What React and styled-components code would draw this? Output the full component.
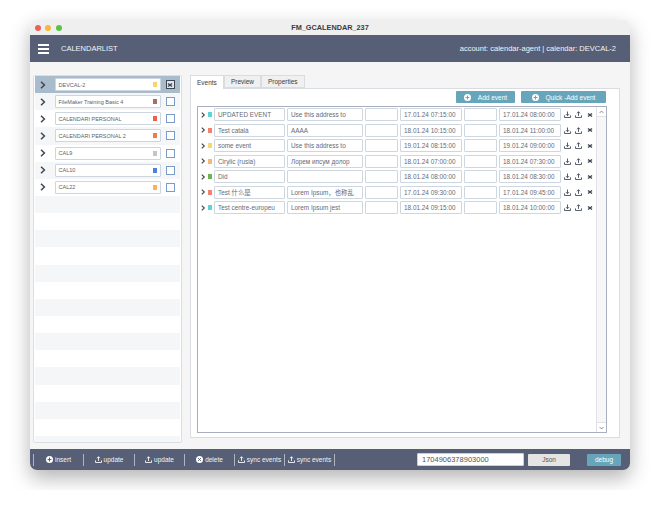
import React from 'react'
import styled, { createGlobalStyle } from 'styled-components'

const calendars = [
  { name: 'DEVCAL-2', color: '#f8d66d', selected: true },
  { name: 'FileMaker Training Basic 4', color: '#a5705f' },
  { name: 'CALENDARI PERSONAL', color: '#ee5f4f' },
  { name: 'CALENDARI PERSONAL 2', color: '#f07b4c' },
  { name: 'CAL9', color: '#c4c4c4' },
  { name: 'CAL10', color: '#4f7fe0' },
  { name: 'CAL22', color: '#f8b355' },
]

const events = [
  { title: 'UPDATED EVENT', desc: 'Use this address to', start: '17.01.24 07:15:00', end: '17.01.24 08:00:00', color: '#62d2da' },
  { title: 'Test català', desc: 'AAAA', start: '18.01.24 10:15:00', end: '18.01.24 11:00:00', color: '#f4806f' },
  { title: 'some event', desc: 'Use this address to', start: '19.01.24 08:15:00', end: '19.01.24 09:00:00', color: '#f8d66d' },
  { title: 'Cirylic (rusia)', desc: 'Лорем ипсум долор', start: '18.01.24 07:00:00', end: '18.01.24 07:30:00', color: '#f8b877' },
  { title: 'Did', desc: '', start: '18.01.24 08:00:00', end: '18.01.24 08:30:00', color: '#6db356' },
  { title: 'Test 什么是', desc: 'Lorem Ipsum，也称乱', start: '17.01.24 09:30:00', end: '17.01.24 09:45:00', color: '#f4806f' },
  { title: 'Test centre-europeu', desc: 'Lorem Ipsum jest', start: '18.01.24 09:15:00', end: '18.01.24 10:00:00', color: '#62d2da' },
]

const Chevron = ({ size = 6 }) => (
  <svg width={size} height={size * 1.34} viewBox="0 0 6 8" fill="none" stroke="#3f4654" strokeWidth="1.5">
    <path d="M1 .8 4.4 4 1 7.2" />
  </svg>
)

const Tray = ({ up, color = '#3f4654', size = 7 }) => (
  <svg width={size} height={size} viewBox="0 0 8 8" fill="none" stroke={color} strokeWidth="1">
    <path d="M.6 5v2.4h6.8V5" />
    <path d={up ? 'M4 5.6V1M2.3 2.6 4 .8l1.7 1.8' : 'M4 .6v4.6M2.3 3.6 4 5.4l1.7-1.8'} />
  </svg>
)

const Plus = ({ size = 7, ink = '#67a5ba' }) => (
  <svg width={size} height={size} viewBox="0 0 8 8">
    <circle cx="4" cy="4" r="4" fill="#fff" />
    <path d="M4 1.8v4.4M1.8 4h4.4" stroke={ink} strokeWidth="1.2" />
  </svg>
)

const Cross = () => (
  <svg width="6" height="6" viewBox="0 0 6 6" stroke="#3f4654" strokeWidth="1.4">
    <path d="M1 1.5 5 4.5M5 1.5 1 4.5" />
  </svg>
)

const DeleteIcon = () => (
  <svg width="7" height="7" viewBox="0 0 8 8">
    <circle cx="4" cy="4" r="4" fill="#fff" />
    <path d="M2.4 2.4 5.6 5.6M5.6 2.4 2.4 5.6" stroke="#565f75" strokeWidth="1.1" />
  </svg>
)

const ScrollChevron = ({ down }) => (
  <svg width="5" height="4" viewBox="0 0 5 4" fill="none" stroke="#777" strokeWidth=".8">
    <path d={down ? 'M.6 1 2.5 3 4.4 1' : 'M.6 3 2.5 1 4.4 3'} />
  </svg>
)

export default function App() {
  return (
    <>
      <GlobalStyle />
      <Window>
        <TitleBar>
          <Lights>
            <Light $color="#ee5f57" />
            <Light $color="#f6b73c" />
            <Light $color="#58c346" />
          </Lights>
          FM_GCALENDAR_237
        </TitleBar>
        <Header>
          <MenuIcon>
            <span />
            <span />
            <span />
          </MenuIcon>
          <HeaderTitle>CALENDARLIST</HeaderTitle>
          <div>account: calendar-agent | calendar: DEVCAL-2</div>
        </Header>
        <Body>
          <CalendarPanel>
            {Array.from({ length: 22 }).map((_, i) => {
              const cal = calendars[i]
              return (
                <CalendarRow key={i} $selected={cal?.selected} $tinted={i % 2 === 1}>
                  {cal && (
                    <>
                      <RowChevron>
                        <Chevron />
                      </RowChevron>
                      <CalendarField>
                        <span>{cal.name}</span>
                        <Swatch $color={cal.color} $w={4} $h={5} />
                      </CalendarField>
                      <CheckBox $selected={cal.selected}>{cal.selected && <Cross />}</CheckBox>
                    </>
                  )}
                </CalendarRow>
              )
            })}
          </CalendarPanel>
          <Content>
            <Tabs>
              <Tab $active>Events</Tab>
              <Tab>Preview</Tab>
              <Tab>Properties</Tab>
            </Tabs>
            <TabPanel>
              <Actions>
                <ActionButton $w={59}>
                  <Plus />
                  Add event
                </ActionButton>
                <ActionButton $w={85}>
                  <Plus />
                  Quick -Add event
                </ActionButton>
              </Actions>
              <EventBox>
                <EventList>
                  {events.map((ev) => (
                    <EventRow key={ev.title}>
                      <Chevron size={4.5} />
                      <Swatch $color={ev.color} $w={4} $h={5} />
                      <Field $w={71}>{ev.title}</Field>
                      <Field $w={76}>{ev.desc}</Field>
                      <Field $w={33} />
                      <Field $w={62}>{ev.start}</Field>
                      <Field $w={33} />
                      <Field $w={62}>{ev.end}</Field>
                      <RowIcons>
                        <Tray />
                        <Tray up />
                        <Cross />
                      </RowIcons>
                    </EventRow>
                  ))}
                </EventList>
                <ScrollBar>
                  <ScrollArrow>
                    <ScrollChevron />
                  </ScrollArrow>
                  <ScrollArrow $down>
                    <ScrollChevron down />
                  </ScrollArrow>
                </ScrollBar>
              </EventBox>
            </TabPanel>
          </Content>
        </Body>
        <Footer>
          <FooterButton $w={50}>
            <Plus ink="#565f75" />
            insert
          </FooterButton>
          <FooterButton $w={51}>
            <Tray up color="#fff" />
            update
          </FooterButton>
          <FooterButton $w={50}>
            <Tray up color="#fff" />
            update
          </FooterButton>
          <FooterButton $w={50}>
            <DeleteIcon />
            delete
          </FooterButton>
          <FooterButton $w={50}>
            <Tray up color="#fff" />
            sync events
          </FooterButton>
          <FooterButton $w={51}>
            <Tray up color="#fff" />
            sync events
          </FooterButton>
          <IdInput>1704906378903000</IdInput>
          <JsonButton>Json</JsonButton>
          <DebugButton>debug</DebugButton>
        </Footer>
      </Window>
    </>
  )
}

const GlobalStyle = createGlobalStyle`
  html, body {
    margin: 0;
    background: #fff;
    font-family: "Liberation Sans", Arial, sans-serif;
  }
  * {
    box-sizing: border-box;
  }
`

const Window = styled.div`
  width: 600px;
  height: 450px;
  margin: 20px 30px;
  display: flex;
  flex-direction: column;
  background: #f5f5f5;
  border-radius: 7px;
  overflow: hidden;
  box-shadow: 0 8px 20px rgba(0, 0, 0, 0.3);
`

const TitleBar = styled.div`
  position: relative;
  height: 15px;
  flex: none;
  display: flex;
  align-items: center;
  justify-content: center;
  background: #efefef;
  color: #3b3b3b;
  font-size: 7.3px;
  font-weight: bold;
`

const Lights = styled.div`
  position: absolute;
  left: 4.5px;
  top: 4.5px;
  display: flex;
  gap: 4.5px;
`

const Light = styled.span`
  width: 6px;
  height: 6px;
  border-radius: 50%;
  background: ${(props) => props.$color};
`

const Header = styled.div`
  height: 27px;
  flex: none;
  display: flex;
  align-items: center;
  padding: 0 14px 0 8px;
  background: #565f75;
  color: #f4f5f7;
  font-size: 7.5px;
`

const MenuIcon = styled.div`
  width: 11px;
  display: flex;
  flex-direction: column;
  gap: 2px;
  margin-right: 12px;

  span {
    height: 2px;
    background: #fff;
  }
`

const HeaderTitle = styled.div`
  flex: 1;
`

const Body = styled.div`
  flex: 1;
  display: flex;
  min-height: 0;
  padding: 13px 10px 11px 3px;
  gap: 8px;
`

const CalendarPanel = styled.div`
  width: 149px;
  height: 368px;
  flex: none;
  padding: 0 1px;
  overflow: hidden;
  background: #fff;
  border: 1px solid #d8dfe6;
  border-radius: 2px;
`

const CalendarRow = styled.div`
  height: 17.15px;
  display: flex;
  align-items: center;
  padding-left: 5px;
  background: ${(props) => (props.$selected ? '#a8bccb' : props.$tinted ? '#f4f6f8' : '#fff')};
`

const RowChevron = styled.div`
  width: 14.5px;
  display: flex;
`

const CalendarField = styled.div`
  width: 106px;
  height: 13px;
  display: flex;
  align-items: center;
  justify-content: space-between;
  padding: 0 3px;
  background: #fff;
  border: 1px solid #cdd5de;
  border-radius: 1px;
  color: #5a5f6a;
  font-size: 5.5px;
`

const Swatch = styled.span`
  flex: none;
  width: ${(props) => props.$w}px;
  height: ${(props) => props.$h}px;
  background: ${(props) => props.$color};
`

const CheckBox = styled.div`
  width: 9px;
  height: 9px;
  margin-left: 5px;
  display: flex;
  align-items: center;
  justify-content: center;
  background: ${(props) => (props.$selected ? '#dfe6ec' : '#fff')};
  border: 1px solid ${(props) => (props.$selected ? '#3f4654' : '#7a9cc6')};
`

const Content = styled.div`
  flex: 1;
  min-width: 0;
  display: flex;
  flex-direction: column;
`

const Tabs = styled.div`
  display: flex;
  height: 13px;
  flex: none;
`

const Tab = styled.div`
  padding: 0 6px;
  display: flex;
  align-items: center;
  margin-bottom: ${(props) => (props.$active ? '-1px' : '0')};
  position: relative;
  background: ${(props) => (props.$active ? '#fff' : '#f0f0f0')};
  border: 1px solid #d9dde2;
  border-bottom: ${(props) => (props.$active ? 'none' : '1px solid #d9dde2')};
  color: #3b3b3b;
  font-size: 6.5px;
`

const TabPanel = styled.div`
  flex: 1;
  min-height: 0;
  display: flex;
  flex-direction: column;
  padding: 2px 12px 4px 6px;
  background: #fff;
  border: 1px solid #d9dde2;
`

const Actions = styled.div`
  display: flex;
  justify-content: flex-end;
  gap: 6px;
  height: 12px;
  flex: none;
  margin: 0 1px 3px 0;
`

const ActionButton = styled.div`
  width: ${(props) => props.$w}px;
  display: flex;
  align-items: center;
  justify-content: center;
  gap: 7px;
  background: #67a5ba;
  border-radius: 1px;
  color: #fff;
  font-size: 6.5px;
`

const EventBox = styled.div`
  flex: 1;
  min-height: 0;
  display: flex;
  border: 1px solid #a9afbe;
`

const EventList = styled.div`
  flex: 1;
  min-width: 0;
`

const EventRow = styled.div`
  height: 15.5px;
  display: flex;
  align-items: center;
  padding-left: 3px;
  gap: 2px;
`

const Field = styled.div`
  width: ${(props) => props.$w}px;
  height: 13px;
  flex: none;
  display: flex;
  align-items: center;
  padding: 0 3.5px;
  overflow: hidden;
  white-space: nowrap;
  background: #fff;
  border: 1px solid #ced6df;
  border-radius: 1px;
  color: #666b76;
  font-size: 6.4px;
  font-family: "Liberation Sans", "Noto Sans CJK SC", sans-serif;
`

const RowIcons = styled.div`
  display: flex;
  align-items: center;
  gap: 4.5px;
  margin-left: 1px;
`

const ScrollBar = styled.div`
  width: 10px;
  flex: none;
  display: flex;
  flex-direction: column;
  justify-content: space-between;
  background: #f7f7f7;
  border-left: 1px solid #e2e2e2;
`

const ScrollArrow = styled.div`
  height: 10px;
  display: flex;
  align-items: center;
  justify-content: center;
  background: #fff;
  border-${(props) => (props.$down ? 'top' : 'bottom')}: 1px solid #e2e2e2;
`

const Footer = styled.div`
  height: 21px;
  flex: none;
  display: flex;
  align-items: center;
  padding-left: 3px;
  background: #565f75;
  color: #f4f5f7;
`

const FooterButton = styled.div`
  width: ${(props) => props.$w}px;
  height: 12px;
  display: flex;
  align-items: center;
  justify-content: center;
  gap: 2px;
  border-left: 1px solid #aeb4c2;
  font-size: 6.5px;

  &:nth-child(6) {
    border-right: 1px solid #aeb4c2;
  }
`

const IdInput = styled.div`
  width: 107px;
  height: 13px;
  margin-left: 82px;
  padding: 0 4px;
  display: flex;
  align-items: center;
  background: #fff;
  border: 1px solid #c9cfd8;
  border-radius: 1px;
  color: #555;
  font-size: 7.5px;
`

const JsonButton = styled.div`
  width: 42px;
  height: 12px;
  margin-left: 4px;
  display: flex;
  align-items: center;
  justify-content: center;
  background: #e4e4e4;
  border-radius: 1px;
  color: #555;
  font-size: 6.5px;
`

const DebugButton = styled.div`
  width: 34px;
  height: 12px;
  margin-left: 17px;
  display: flex;
  align-items: center;
  justify-content: center;
  background: #67a5ba;
  border-radius: 1px;
  color: #fff;
  font-size: 6.5px;
`
